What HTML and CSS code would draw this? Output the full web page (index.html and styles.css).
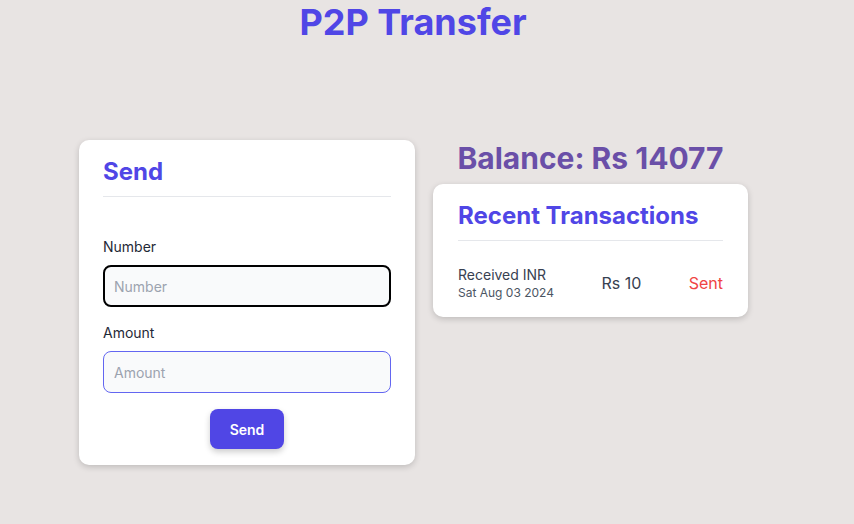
FILE: index.html
```html
<!DOCTYPE html>
<html>
<head>
<meta charset="utf-8">
<link rel="stylesheet" href="styles.css">
</head>
<body>
<div class="page">
  <h1 class="title">P2P Transfer</h1>
  <div class="row">
    <div class="card send-card">
      <h2 class="card-title">Send</h2>
      <div class="form">
        <label class="label">Number</label>
        <input class="input input-focus" placeholder="Number">
        <label class="label label-gap">Amount</label>
        <input class="input input-ring" placeholder="Amount">
        <div class="btn-wrap"><button class="btn">Send</button></div>
      </div>
    </div>
    <div class="right">
      <div class="balance">Balance: Rs 14077</div>
      <div class="card tx-card">
        <h2 class="card-title">Recent Transactions</h2>
        <div class="tx">
          <div class="tx-info">
            <div class="tx-name">Received INR</div>
            <div class="tx-date">Sat Aug 03 2024</div>
          </div>
          <div class="tx-amt">Rs 10</div>
          <div class="tx-status">Sent</div>
        </div>
      </div>
    </div>
  </div>
</div>
</body>
</html>
```

FILE: styles.css
```css
* { box-sizing: border-box; }
html, body { margin: 0; padding: 0; }
body {
  background: #e8e4e3;
  font-family: Inter, "Noto Sans", sans-serif;
  width: 854px;
  height: 524px;
  overflow: hidden;
}
.page { padding: 0; }
.title {
  margin: 0;
  padding-right: 28px;
  text-align: center;
  font-size: 36px;
  line-height: 44px;
  font-weight: 700;
  color: #5046e6;
}
.row {
  display: flex;
  align-items: flex-start;
  gap: 18px;
  margin-top: 96px;
  padding-left: 79px;
}
.card {
  background: #fff;
  border-radius: 10px;
  box-shadow: 0 2px 6px rgba(0,0,0,0.18);
  padding: 16px 24px;
}
.send-card { width: 336px; }
.card-title {
  margin: 0;
  font-size: 24px;
  line-height: 32px;
  font-weight: 700;
  color: #5046e6;
  padding-bottom: 8px;
  border-bottom: 1px solid #e5e7eb;
}
.form { padding-top: 40px; display: flex; flex-direction: column; }
.label {
  font-size: 14px;
  line-height: 20px;
  font-weight: 400;
  color: #1f2937;
  margin-bottom: 8px;
}
.label-gap { margin-top: 16px; }
.input {
  height: 42px;
  width: 100%;
  border-radius: 8px;
  background: #f9fafb;
  border: 1px solid #d1d5db;
  padding: 0 10px;
  font-family: inherit;
  font-size: 14px;
  color: #111827;
  outline: none;
}
.input::placeholder { color: #9ca3af; }
.input-focus { border: 2px solid #000; padding-left: 9px; }
.input-ring { border: 1px solid #6366f1; }
.btn-wrap { display: flex; justify-content: center; margin-top: 16px; }
.btn {
  height: 40px;
  width: 74px;
  border: none;
  border-radius: 8px;
  background: #5046e5;
  color: #fff;
  font-family: inherit;
  font-size: 14px;
  font-weight: 600;
  box-shadow: 0 3px 6px rgba(0,0,0,0.2);
}
.right { width: 315px; display: flex; flex-direction: column; }
.balance {
  text-align: center;
  font-size: 30px;
  line-height: 36px;
  font-weight: 700;
  color: #6a4fa8;
  margin-bottom: 8px;
}
.tx-card { padding: 16px 25px 16px 25px; }
.tx {
  display: flex;
  justify-content: space-between;
  align-items: center;
  padding-top: 24px;
}
.tx-name { font-size: 14px; line-height: 20px; color: #374151; }
.tx-date { font-size: 12px; line-height: 16px; color: #4b5563; }
.tx-amt { font-size: 16px; line-height: 24px; color: #374151; }
.tx-status { font-size: 16px; line-height: 24px; color: #ef4444; }
```
